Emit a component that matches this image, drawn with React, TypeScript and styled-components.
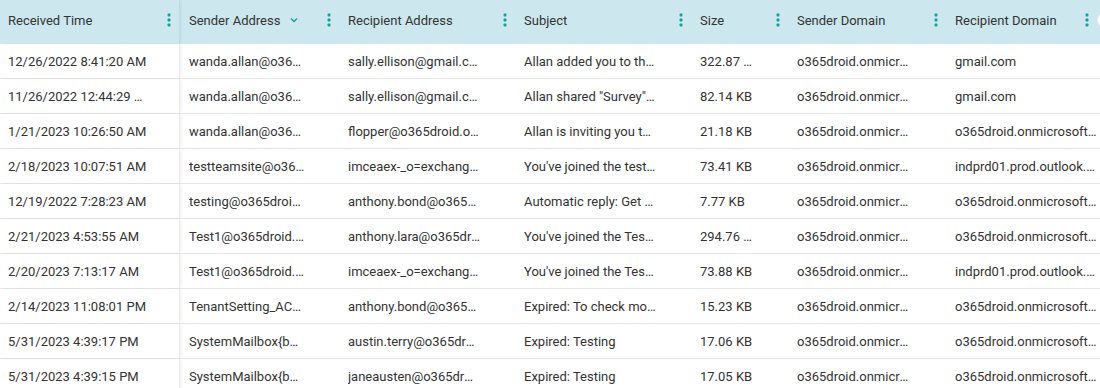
import React from "react";
import styled, { createGlobalStyle } from "styled-components";

const Global = createGlobalStyle`
  html, body { margin: 0; padding: 0; background: #fff; }
  body { font-family: Roboto, "Noto Sans", Arial, sans-serif; }
  * { box-sizing: border-box; }
`;

const COLS = "180px 159px 176px 176px 97px 158px";
const RIGHT_PAD = [30, 34, 35, 34, 35, 35, 1];

const Grid = styled.div`
  width: 1100px;
  height: 388px;
  overflow: hidden;
  background: #fff;
  color: #333;
  font-size: 13px;
`;

const HeaderRow = styled.div`
  display: grid;
  grid-template-columns: ${COLS} 151px 1fr;
  height: 44px;
  background: #cde7ee;
`;

const HeaderCell = styled.div<{ $pinned?: boolean }>`
  display: flex;
  align-items: center;
  padding: 0 8px 4px ${(p) => (p.$pinned ? "8px" : "9px")};
  min-width: 0;
  color: #333;
  ${(p) =>
    p.$pinned &&
    `
    border-right: 1px solid #c2dbe2;
    box-shadow: 2px 0 3px -1px rgba(0,0,0,0.06);
    z-index: 1;
  `}
`;

const HeaderLabel = styled.span`
  flex: 1;
  display: flex;
  align-items: center;
  gap: 8px;
  white-space: nowrap;
  overflow: hidden;
`;

const SortIcon = styled.svg`
  width: 8px;
  height: 6px;
  margin-left: 2px;
  flex: none;
`;

const Kebab = styled.svg`
  width: 4px;
  height: 14px;
  flex: none;
`;

const ChooserCell = styled.div`
  display: flex;
  align-items: center;
  padding-bottom: 4px;
`;

const ChooserButton = styled.div`
  width: 20px;
  height: 20px;
  border-radius: 50%;
  background: #fff;
  border: 1px solid #e3eef1;
  flex: none;
`;

const BodyRow = styled.div`
  display: grid;
  grid-template-columns: ${COLS} 1fr;
  height: 35px;
  border-bottom: 1px solid #e6e6e6;
`;

const Cell = styled.div<{ $pinned?: boolean; $padRight: number }>`
  display: flex;
  align-items: center;
  min-width: 0;
  padding: 0 ${(p) => p.$padRight}px 0 ${(p) => (p.$pinned ? "8px" : "9px")};
  ${(p) =>
    p.$pinned &&
    `
    border-right: 1px solid #ececec;
    box-shadow: 2px 0 3px -1px rgba(0,0,0,0.07);
    z-index: 1;
  `}
`;

const CellText = styled.span`
  display: block;
  width: 100%;
  white-space: nowrap;
  overflow: hidden;
  text-overflow: ellipsis;
`;

const KebabIcon = () => (
  <Kebab viewBox="0 0 4 14">
    <rect x="0.6" y="0.6" width="2.8" height="2.8" rx="0.6" fill="#11a09c" />
    <rect x="0.6" y="5.6" width="2.8" height="2.8" rx="0.6" fill="#11a09c" />
    <rect x="0.6" y="10.6" width="2.8" height="2.8" rx="0.6" fill="#11a09c" />
  </Kebab>
);

const headers = [
  "Received Time",
  "Sender Address",
  "Recipient Address",
  "Subject",
  "Size",
  "Sender Domain",
  "Recipient Domain",
];

const rows: string[][] = [
  ["12/26/2022 8:41:20 AM", "wanda.allan@o365droid.onmicrosoft.com", "sally.ellison@gmail.com", "Allan added you to the team", "322.87 KB", "o365droid.onmicrosoft.com", "gmail.com"],
  ["11/26/2022 12:44:29 PM", "wanda.allan@o365droid.onmicrosoft.com", "sally.ellison@gmail.com", "Allan shared \"Survey\" with you", "82.14 KB", "o365droid.onmicrosoft.com", "gmail.com"],
  ["1/21/2023 10:26:50 AM", "wanda.allan@o365droid.onmicrosoft.com", "flopper@o365droid.onmicrosoft.com", "Allan is inviting you to a meeting", "21.18 KB", "o365droid.onmicrosoft.com", "o365droid.onmicrosoft.com"],
  ["2/18/2023 10:07:51 AM", "testteamsite@o365droid.onmicrosoft.com", "imceaex-_o=exchangelabs_ou=exchange", "You've joined the testteamsite group", "73.41 KB", "o365droid.onmicrosoft.com", "indprd01.prod.outlook.com"],
  ["12/19/2022 7:28:23 AM", "testing@o365droid.onmicrosoft.com", "anthony.bond@o365droid.onmicrosoft.com", "Automatic reply: Get together", "7.77 KB", "o365droid.onmicrosoft.com", "o365droid.onmicrosoft.com"],
  ["2/21/2023 4:53:55 AM", "Test1@o365droid.onmicrosoft.com", "anthony.lara@o365droid.onmicrosoft.com", "You've joined the Test group", "294.76 KB", "o365droid.onmicrosoft.com", "o365droid.onmicrosoft.com"],
  ["2/20/2023 7:13:17 AM", "Test1@o365droid.onmicrosoft.com", "imceaex-_o=exchangelabs_ou=exchange", "You've joined the Test group", "73.88 KB", "o365droid.onmicrosoft.com", "indprd01.prod.outlook.com"],
  ["2/14/2023 11:08:01 PM", "TenantSetting_ACCOUNT@o365droid.onmicrosoft.com", "anthony.bond@o365droid.onmicrosoft.com", "Expired: To check more details", "15.23 KB", "o365droid.onmicrosoft.com", "o365droid.onmicrosoft.com"],
  ["5/31/2023 4:39:17 PM", "SystemMailbox{bb558c35-97f1-4cb9}", "austin.terry@o365droid.onmicrosoft.com", "Expired: Testing", "17.06 KB", "o365droid.onmicrosoft.com", "o365droid.onmicrosoft.com"],
  ["5/31/2023 4:39:15 PM", "SystemMailbox{bb558c35-97f1-4cb9}", "janeausten@o365droid.onmicrosoft.com", "Expired: Testing", "17.05 KB", "o365droid.onmicrosoft.com", "o365droid.onmicrosoft.com"],
];

export default function App() {
  return (
    <>
      <Global />
      <Grid>
        <HeaderRow>
          {headers.map((h, i) => (
            <HeaderCell key={h} $pinned={i === 0}>
              <HeaderLabel>
                {h}
                {i === 1 && (
                  <SortIcon viewBox="0 0 8 6">
                    <path d="M1 1.5 L4 4.5 L7 1.5" fill="none" stroke="#11a09c" strokeWidth="1.4" />
                  </SortIcon>
                )}
              </HeaderLabel>
              <KebabIcon />
            </HeaderCell>
          ))}
          <ChooserCell>
            <ChooserButton />
          </ChooserCell>
        </HeaderRow>
        {rows.map((r, ri) => (
          <BodyRow key={ri}>
            {r.map((c, ci) => (
              <Cell key={ci} $pinned={ci === 0} $padRight={RIGHT_PAD[ci]}>
                <CellText>{c}</CellText>
              </Cell>
            ))}
          </BodyRow>
        ))}
      </Grid>
    </>
  );
}
